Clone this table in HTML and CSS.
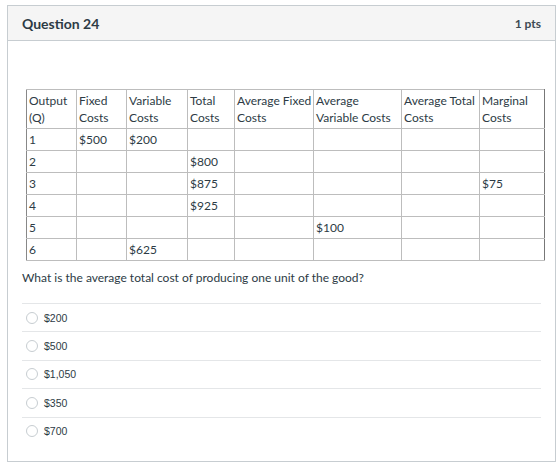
FILE: index.html
```html
<!DOCTYPE html>
<html lang="en">
  <head>
    <meta charset="UTF-8" />
    <meta name="viewport" content="width=device-width, initial-scale=1.0" />
    <title>Question 24</title>
    <link rel="stylesheet" href="styles.css">
  </head>
  <body>
    <div class="question">
      <div class="header">
        <h2 class="title">Question 24</h2>
        <span class="pts">1 pts</span>
      </div>
      <div class="content">
        <table class="costs">
          <tr>
            <td class="c1">Output (Q)</td>
            <td class="c2">Fixed Costs</td>
            <td class="c3">Variable Costs</td>
            <td class="c4">Total Costs</td>
            <td class="c5">Average Fixed Costs</td>
            <td class="c6">Average Variable Costs</td>
            <td class="c7">Average Total Costs</td>
            <td class="c8">Marginal Costs</td>
          </tr>
          <tr><td>1</td><td>$500</td><td>$200</td><td></td><td></td><td></td><td></td><td></td></tr>
          <tr><td>2</td><td></td><td></td><td>$800</td><td></td><td></td><td></td><td></td></tr>
          <tr><td>3</td><td></td><td></td><td>$875</td><td></td><td></td><td></td><td>$75</td></tr>
          <tr><td>4</td><td></td><td></td><td>$925</td><td></td><td></td><td></td><td></td></tr>
          <tr><td>5</td><td></td><td></td><td></td><td></td><td>$100</td><td></td><td></td></tr>
          <tr><td>6</td><td></td><td>$625</td><td></td><td></td><td></td><td></td><td></td></tr>
        </table>
        <p class="text">What is the average total cost of producing one unit of the good?</p>
        <div class="answers">
          <label class="answer"><span class="radio"></span>$200</label>
          <label class="answer"><span class="radio"></span>$500</label>
          <label class="answer"><span class="radio"></span>$1,050</label>
          <label class="answer"><span class="radio"></span>$350</label>
          <label class="answer"><span class="radio"></span>$700</label>
        </div>
      </div>
    </div>
  </body>
</html>
```

FILE: styles.css
```css
body {
  margin: 0;
  padding: 5px 4px 0 7px;
  background-color: white;
  font-family: Lato, "Open Sans", sans-serif;
  color: #2d3b45;
}
.question {
  border: 1px solid #c7cdd1;
  box-sizing: border-box;
  height: 457px;
}
.header {
  display: flex;
  justify-content: space-between;
  align-items: center;
  height: 34px;
  padding: 0 14px 0 14px;
  background-color: #f5f5f5;
  border-bottom: 1px solid #c7cdd1;
}
.title {
  margin: 0;
  font-size: 14px;
  font-weight: bold;
}
.pts {
  font-size: 12px;
  font-weight: bold;
  color: #3d4a53;
}
.content {
  padding: 48px 14px 0 14px;
}
.costs {
  width: 518px;
  margin-left: 4px;
  border-collapse: collapse;
  table-layout: fixed;
  font-size: 12px;
  line-height: 17px;
  color: #2d3b45;
  border: 1px solid #888;
}
.costs td {
  border: 1px solid #bdbdbd;
  padding: 2px 0 2px 2px;
  vertical-align: top;
  height: 17px;
}
.costs td:first-child {
  border-left: 1px solid #888;
}
.costs td:last-child {
  border-right: 1px solid #777;
}
.c1 { width: 47px; }
.c2 { width: 47px; }
.c3 { width: 58px; }
.c4 { width: 44px; }
.c5 { width: 76px; }
.c6 { width: 85px; }
.c7 { width: 75px; }
.c8 { width: 62px; }
.text {
  margin: 8px 0 0 0;
  font-size: 12px;
  line-height: 18px;
}
.answers {
  margin-top: 16px;
}
.answer {
  display: flex;
  align-items: center;
  height: 27.4px;
  border-top: 1px solid #e4e6e8;
  font-family: "Liberation Sans", Arial, sans-serif;
  font-size: 10.5px;
  color: #2d3b45;
}
.radio {
  width: 10px;
  height: 10px;
  margin: 0 6px 0 4px;
  border: 1px solid #c7cdd1;
  border-radius: 50%;
  background-color: white;
}
```
